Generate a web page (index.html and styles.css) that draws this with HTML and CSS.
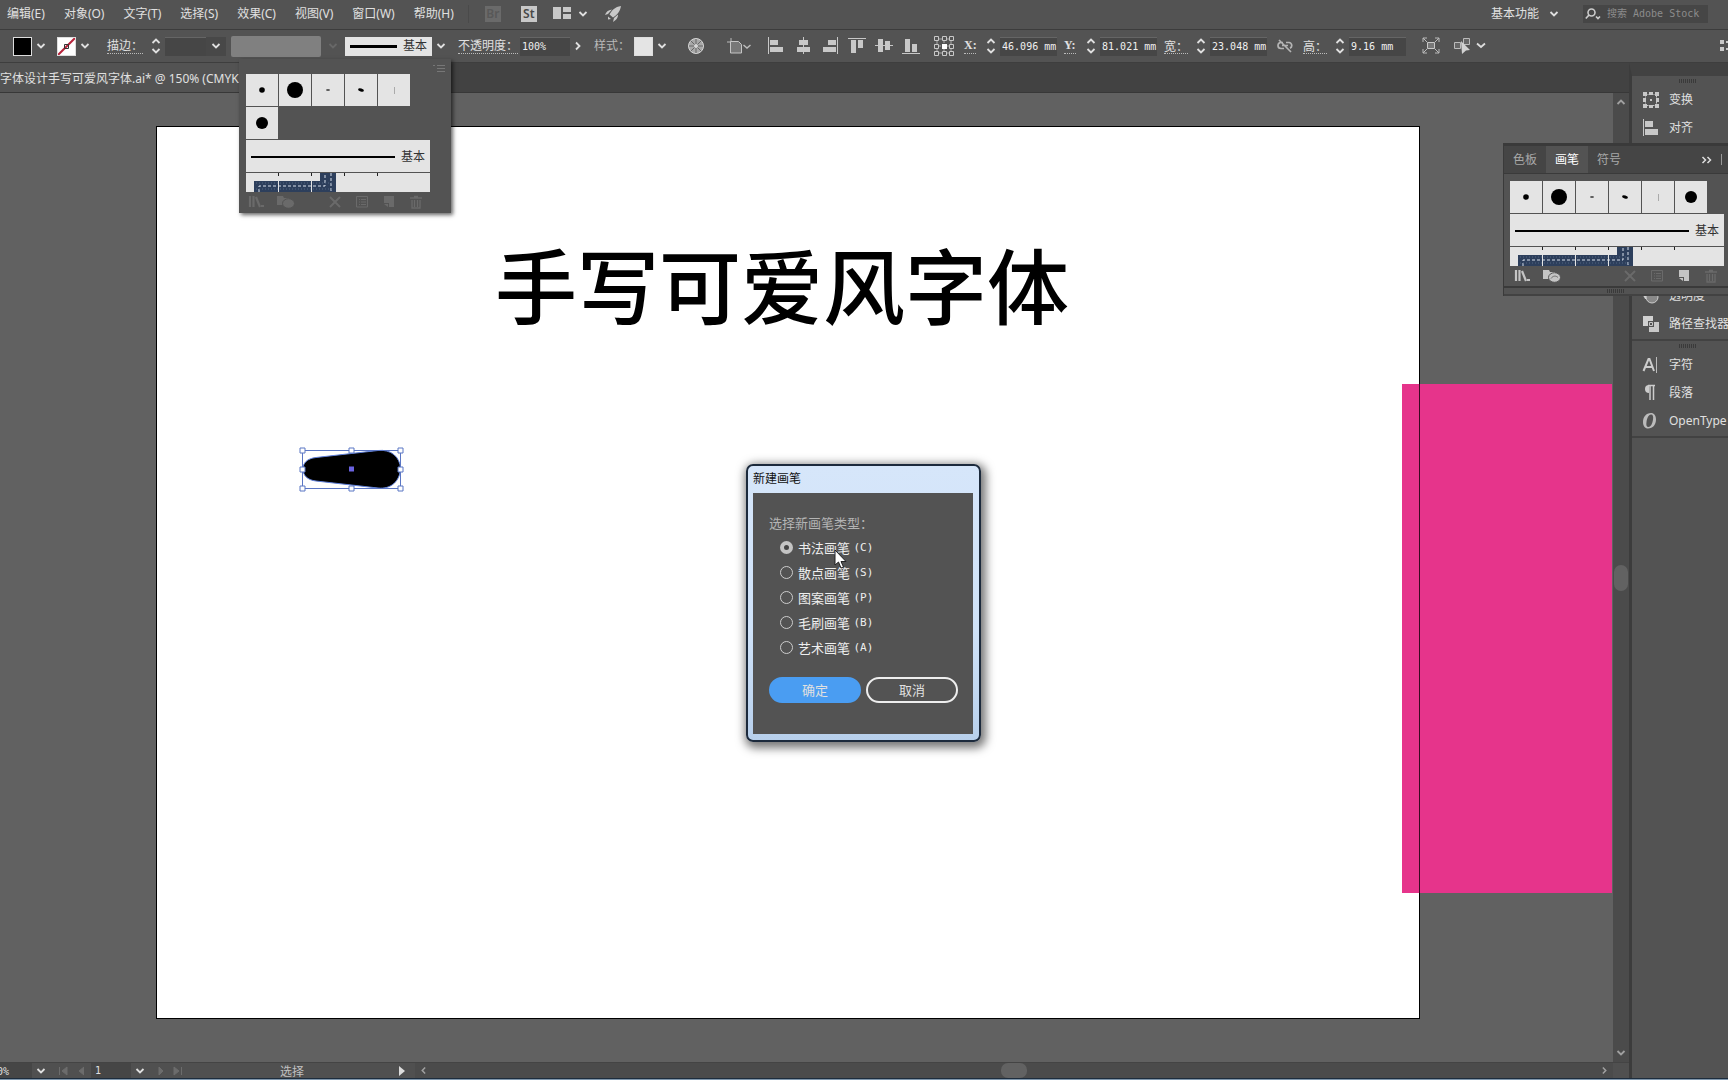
FILE: index.html
```html
<!DOCTYPE html>
<html lang="zh-CN">
<head>
<meta charset="utf-8">
<title>字体设计手写可爱风字体.ai</title>
<link rel="stylesheet" href="styles.css">
</head>
<body>
<svg class="defs" aria-hidden="true">
  <symbol id="chev" viewBox="0 0 10 6"><path d="M1.5 1l3.5 3.5L8.500 1" fill="none" stroke="currentColor" stroke-width="1.800"/></symbol>
  <symbol id="chev-r" viewBox="0 0 6 10"><path d="M1 1.500l3.500 3.500L1 8.500" fill="none" stroke="currentColor" stroke-width="1.800"/></symbol>
  <symbol id="spin" viewBox="0 0 10 16"><path d="M1.500 5L5 1.500 8.500 5M1.500 11L5 14.500 8.500 11" fill="none" stroke="currentColor" stroke-width="1.800"/></symbol>
  <symbol id="grip" viewBox="0 0 20 4"><path d="M1 2h18" stroke="#3a3a3a" stroke-width="4" stroke-dasharray="1 1"/></symbol>
  <symbol id="lib" viewBox="0 0 16 14"><path d="M2 1v11M5.500 1v11M8 2l4 10" fill="none" stroke="currentColor" stroke-width="2.200"/><path d="M13 10h3v2h-3z" fill="currentColor"/></symbol>
  <symbol id="folder" viewBox="0 0 18 14"><path d="M0 1h6l1 2h5v7H0z" fill="currentColor"/><ellipse cx="11.500" cy="8.500" rx="6" ry="4.800" fill="currentColor" stroke="#535353"/><path d="M8 9.500c2-3 5-3 7-1" fill="none" stroke="#6a6a6a"/></symbol>
  <symbol id="cross" viewBox="0 0 14 14"><path d="M2 2l10 10M12 2L2 12" stroke="currentColor" stroke-width="2"/></symbol>
  <symbol id="opts" viewBox="0 0 14 14"><path d="M1.500 1.500h11v10.500h-11zM4 4.500h1M6 4.500h5M4 7h1M6 7h5M4 9.500h1M6 9.500h5" fill="none" stroke="currentColor"/></symbol>
  <symbol id="newdoc" viewBox="0 0 14 14"><path d="M2 1h10v11H7V8H2z" fill="currentColor"/><path d="M2 9h4v3z" fill="currentColor"/></symbol>
  <symbol id="bin" viewBox="0 0 14 14"><path d="M1 3h12M5 1.500h4M3 5v8h8V5M5.500 5v7M8.500 5v7" fill="none" stroke="currentColor" stroke-width="1.300"/></symbol>
</svg>

<div class="app">
  <header class="menubar">
    <nav class="menus">
      <button>编辑(E)</button><button>对象(O)</button><button>文字(T)</button><button>选择(S)</button><button>效果(C)</button><button>视图(V)</button><button>窗口(W)</button><button>帮助(H)</button>
    </nav>
    <div class="apps">
      <button class="tile off">Br</button>
      <button class="tile">St</button>
      <button class="arrange" aria-label="排列文档"><svg width="18" height="13"><path d="M0 0h8v12H0zM10 0h8v5h-8zM10 7h8v5h-8z" fill="#c8c8c8"/></svg><svg width="10" height="6"><use href="#chev"/></svg></button>
      <button aria-label="GPU"><svg width="18" height="18" viewBox="0 0 18 18"><path d="M17 1C11 2 8 5 5.500 9.500l3.500 3C13 10 16 7 17 1zM8 4.500C4 5 2 7 1 10l3-1zM14 9.500c0 4-2 5.500-5 7.500l1-4zM4 11.500l3 2.500-3 .5z" fill="#c8c8c8"/></svg></button>
    </div>
    <div class="menu-right">
      <button class="workspace">基本功能 <svg width="10" height="6"><use href="#chev"/></svg></button>
      <label class="search"><svg width="17" height="12" viewBox="0 0 17 12"><circle cx="6.500" cy="4.500" r="3.500" fill="none" stroke="#ccc" stroke-width="1.600"/><path d="M4 7L.8 10.500M11 8.500l2 2 2-2" fill="none" stroke="#ccc" stroke-width="1.700"/></svg><input type="text" placeholder="搜索 Adobe Stock" aria-label="搜索 Adobe Stock"></label>
    </div>
  </header>

  <div class="controls">
    <div class="grp colors">
      <span class="swatch fill"></span><button class="drop" aria-label="填色"><svg width="10" height="6"><use href="#chev"/></svg></button>
      <span class="swatch none"><svg width="19" height="19"><path d="M1 18L18 1" stroke="#b8243c" stroke-width="2"/><path d="M7.500 7.500h4v4h-4z" fill="none" stroke="#333"/></svg></span><button class="drop" aria-label="描边颜色"><svg width="10" height="6"><use href="#chev"/></svg></button>
    </div>
    <div class="grp">
      <label class="lab" for="sw">描边：</label>
      <svg class="spin" width="10" height="16"><use href="#spin"/></svg>
      <input id="sw" class="field stroke-w" type="text"><button class="drop sunk" aria-label="描边粗细"><svg width="10" height="6"><use href="#chev"/></svg></button>
      <span class="profile"></span><button class="drop off" aria-label="宽度配置"><svg width="10" height="6"><use href="#chev"/></svg></button>
      <button class="brushbox"><i></i>基本</button><button class="drop" aria-label="画笔定义"><svg width="10" height="6"><use href="#chev"/></svg></button>
    </div>
    <div class="grp">
      <label class="lab" for="op">不透明度：</label>
      <input id="op" class="field opacity" type="text" value="100%"><button class="more" aria-label="不透明度"><svg width="6" height="10"><use href="#chev-r"/></svg></button>
    </div>
    <div class="grp style-grp">
      <span class="plain">样式：</span><span class="swatch light"></span><button class="drop" aria-label="样式"><svg width="10" height="6"><use href="#chev"/></svg></button>
    </div>
    <button class="ic" aria-label="重新着色"><svg width="18" height="18" viewBox="0 0 18 18"><circle cx="9" cy="9" r="7.500" fill="#a8a8a8" stroke="#d6d6d6"/><path d="M9 2v14M2 9h14M4 4l10 10M14 4L4 14" stroke="#666"/><circle cx="9" cy="9" r="2" fill="#d6d6d6"/></svg></button>
    <button class="ic wide" aria-label="对齐画板"><svg width="26" height="18" viewBox="0 0 26 18"><path d="M5 1v4M1 5h4" stroke="#bbb"/><path d="M4.500 4.500h8l3 3V16h-11z" fill="#777" stroke="#c4c4c4"/><path d="M17.500 8l3.500 3 3.500-3" fill="none" stroke="#bbb" stroke-width="1.500"/></svg></button>
    <div class="aligns">
      <button aria-label="左对齐"><svg width="18" height="18"><path d="M1.500 0v17" stroke="#c8c8c8"/><path d="M3 3h8v5H3zM3 10h13v5H3z" fill="#c8c8c8"/></svg></button>
      <button aria-label="水平居中"><svg width="18" height="18"><path d="M9.500 0v17" stroke="#c8c8c8"/><path d="M5 3h9v5H5zM3 10h13v5H3z" fill="#c8c8c8"/></svg></button>
      <button aria-label="右对齐"><svg width="18" height="18"><path d="M16.500 0v17" stroke="#c8c8c8"/><path d="M7 3h8v5H7zM2 10h13v5H2z" fill="#c8c8c8"/></svg></button>
      <button aria-label="顶对齐"><svg width="18" height="18"><path d="M0 1.500h18" stroke="#c8c8c8"/><path d="M3 3h5v13H3zM10 3h5v8h-5z" fill="#c8c8c8"/></svg></button>
      <button aria-label="垂直居中"><svg width="18" height="18"><path d="M0 8.500h18" stroke="#c8c8c8"/><path d="M3 2h5v13H3zM10 4h5v9h-5z" fill="#c8c8c8"/></svg></button>
      <button aria-label="底对齐"><svg width="18" height="18"><path d="M0 16.500h18" stroke="#c8c8c8"/><path d="M3 2h5v13H3zM10 7h5v8h-5z" fill="#c8c8c8"/></svg></button>
    </div>
    <button class="ic refpt" aria-label="参考点"><svg width="20" height="20"><path d="M3 3h14v14H3zM10 3v4M10 13v4M3 10h4M13 10h4" fill="none" stroke="#aaa"/><g fill="#535353" stroke="#c8c8c8"><path d="M.5.500h4v4h-4zM8.500.500h4v4h-4zM15.500.500h4v4h-4zM.5 8.500h4v4h-4zM15.500 8.500h4v4h-4zM.5 15.500h4v4h-4zM8.500 15.500h4v4h-4zM15.500 15.500h4v4h-4z"/></g><path d="M8 8h5v5H8z" fill="#fff"/></svg></button>
    <div class="xf"><label class="lab" for="fx">X:</label><svg class="spin" width="10" height="16"><use href="#spin"/></svg><input id="fx" class="field" type="text" value="46.096 mm"></div>
    <div class="xf"><label class="lab" for="fy">Y:</label><svg class="spin" width="10" height="16"><use href="#spin"/></svg><input id="fy" class="field" type="text" value="81.021 mm"></div>
    <div class="xf cjk"><label class="lab" for="fw">宽：</label><svg class="spin" width="10" height="16"><use href="#spin"/></svg><input id="fw" class="field" type="text" value="23.048 mm"></div>
    <button class="ic link" aria-label="约束比例"><svg width="16" height="14" viewBox="0 0 16 14"><path d="M6 3.500H4a3 3 0 0 0 0 6h3M9 3.500h3a3 3 0 0 1 1 5.700M5 6.500h6M2 1l12 12" fill="none" stroke="#b4b4b4" stroke-width="1.700"/></svg></button>
    <div class="xf cjk"><label class="lab" for="fh">高：</label><svg class="spin" width="10" height="16"><use href="#spin"/></svg><input id="fh" class="field" type="text" value="9.16 mm"></div>
    <button class="ic" aria-label="隔离"><svg width="18" height="18"><path d="M5.500 5.500h7v6h-7z" fill="#777" stroke="#c8c8c8"/><path d="M1 1l4 4M17 1l-4 4M1 16l4-4M17 16l-4-4M1 5V1h4M13 1h4v4M1 12v4h4M13 16h4v-4" fill="none" stroke="#bbb"/></svg></button>
    <button class="ic wide" aria-label="选择类似"><svg width="34" height="18"><path d="M1.500 5.500h6v6h-6zM10.500 1.500h6v6h-6z" fill="#666" stroke="#bbb"/><path d="M8 4l9 9-4 .5L9 17z" fill="#d2d2d2"/><path d="M24 6.500l4 3.500 4-3.500" fill="none" stroke="#ddd" stroke-width="1.800"/></svg></button>
    <button class="ic last" aria-label="面板"><svg width="9" height="14"><path d="M1 1h4v4H1zM1 8h4v4H1zM7 2h2v2H7zM7 9h2v2H7z" fill="#c8c8c8"/></svg></button>
  </div>

  <div class="work">
    <main class="doc">
      <div class="tabs"><button class="tab">字体设计手写可爱风字体.ai* @ 150% (CMYK/预览)</button></div>
      <div class="view">
        <div class="canvas">
          <div class="artboard"></div>
          <div class="pink"></div>
          <div class="edge"></div>
          <h1 class="headline">手写可爱风字体</h1>
          <svg class="shape" width="106" height="46" viewBox="0 0 106 46">
            <path d="M17 10.500L79 3.500C92 2 101 10 101.500 21.500 101 34 92 42.500 79 41L17 34C8 33 4 28 4 22S8 11.500 17 10.500z" fill="#000" stroke="#5f7fd8"/>
            <path d="M3.500 3.500h98v38h-98z" fill="none" stroke="#5b76c4"/>
            <g fill="#fff" stroke="#5b76c4"><path d="M1 1h5v5H1zM50 1h5v5h-5zM99 1h5v5h-5zM1 20h5v5H1zM99 20h5v5h-5zM1 39h5v5H1zM50 39h5v5h-5zM99 39h5v5h-5z"/></g>
            <path d="M50 19.500h5v5h-5z" fill="#6a62e0"/>
          </svg>
        </div>
        <div class="vscroll"><svg class="flip" width="10" height="6"><use href="#chev"/></svg><i></i><svg width="10" height="6"><use href="#chev"/></svg></div>
      </div>
      <footer class="status">
        <span class="zoom">150%</span><button class="drop" aria-label="缩放"><svg width="10" height="6"><use href="#chev"/></svg></button>
        <svg class="nav" width="26" height="10"><path d="M1.500 1v8M9 1v8L4 5zM26 1v8l-5-4z" fill="#6c6c6c" stroke="#6c6c6c" stroke-width="1"/></svg>
        <input class="page" type="text" value="1" aria-label="画板"><button class="drop" aria-label="画板导航"><svg width="10" height="6"><use href="#chev"/></svg></button>
        <svg class="nav" width="26" height="10"><path d="M2 1v8l4-4zM17 1v8l5-4zM24.500 1v8" fill="#6c6c6c" stroke="#6c6c6c"/></svg>
        <span class="tool">选择</span>
        <svg class="play" width="6" height="10"><path d="M0 0v10l6-5z" fill="#ddd"/></svg>
        <div class="hscroll"><svg class="flip" width="5" height="9" viewBox="0 0 6 10"><use href="#chev-r"/></svg><i></i><svg width="5" height="9" viewBox="0 0 6 10"><use href="#chev-r"/></svg></div>
      </footer>
    </main>

    <aside class="dock">
      <section>
        <svg class="grip" width="20" height="4"><use href="#grip"/></svg>
        <button><svg width="18" height="18"><path d="M3.500 3.500h11v11h-11z" fill="none" stroke="#c8c8c8" stroke-dasharray="2 1"/><path d="M1 1h4v4H1zM7 1h4v3H7zM13 1h4v4h-4zM1 13h4v4H1zM13 13h4v4h-4zM7 14h4v3H7zM1 7h3v4H1zM14 7h3v4h-3zM8 8h2v2H8z" fill="#c8c8c8"/></svg>变换</button>
        <button><svg width="18" height="18"><path d="M1.500 0v17" stroke="#c8c8c8"/><path d="M3 2h8v6H3zM3 10h13v6H3z" fill="#c8c8c8"/></svg>对齐</button>
      </section>
      <section class="lower">
        <button><svg width="18" height="18"><circle cx="7" cy="7" r="6" fill="#d0d0d0"/><circle cx="10" cy="10" r="6" fill="#888" stroke="#ccc"/></svg>透明度</button>
        <button><svg width="18" height="18"><path d="M1 1h10v5H6v5H1z" fill="#d0d0d0"/><path d="M12 7h5v10H7v-5h5z" fill="#c8c8c8"/><path d="M7.500 7.500h3v3h-3z" fill="none" stroke="#c8c8c8"/></svg>路径查找器</button>
      </section>
      <section>
        <svg class="grip" width="20" height="4"><use href="#grip"/></svg>
        <button><svg width="18" height="18"><path d="M1.500 15L6.500 3h1L12 15M3 11h7" fill="none" stroke="#ccc" stroke-width="2"/><path d="M14.500 1v16" stroke="#bbb"/></svg>字符</button>
        <button><svg width="18" height="18"><path d="M7 9a4 4 0 0 1 0-8z" fill="#ccc"/><path d="M6 1.500h7M8 1v15M11.500 1v15" stroke="#ccc" stroke-width="1.500"/></svg>段落</button>
        <button><svg width="18" height="18"><path d="M9 1C4 1 1 5 1 10c0 4 2 6.500 5 6.500 5 0 8-4 8-9C14 3.500 12 1 9 1zM9 2.500c2 0 2.500 2 2 5C10.500 12 8.500 15 6.500 15s-2.500-2-2-5C5 5.500 7 2.500 9 2.500z" fill="#bbb" fill-rule="evenodd"/></svg>OpenType</button>
      </section>
    </aside>
  </div>
  <div class="taskbar"></div>
</div>

<div class="brush-pop">
  <svg class="burger" width="12" height="8"><path d="M0 1.500h2M4 1.500h8M4 4.500h8M4 7.500h8" stroke="#777"/></svg>
  <div class="cells">
    <button aria-label="画笔 1"><svg width="32" height="32"><circle cx="16" cy="16" r="2.800"/></svg></button><button aria-label="画笔 2"><svg width="32" height="32"><circle cx="16" cy="16" r="8"/></svg></button><button aria-label="画笔 3"><svg width="32" height="32"><ellipse cx="16" cy="16" rx="2" ry="1" fill="#555"/></svg></button><button aria-label="画笔 4"><svg width="32" height="32"><ellipse cx="16" cy="16" rx="3" ry="1.500" transform="rotate(15 16 16)"/></svg></button><button aria-label="画笔 5"><svg width="32" height="32"><path d="M16.500 13v7" stroke="#aaa"/></svg></button><button aria-label="画笔 6"><svg width="32" height="32"><circle cx="16" cy="16" r="6"/></svg></button>
  </div>
  <button class="basic"><i></i>基本</button>
  <svg class="pattern" width="184" height="19"><path d="M8 8h66V0h16v19H8z" fill="#2d3f5c"/><path d="M13 19v-6h66V0M85 0v19" fill="none" stroke="#d8e0ea" stroke-dasharray="3 2"/><path d="M10 16h78M10 10h78" stroke="#526681" stroke-dasharray="1 2"/><path d="M32.500 8v11M65.500 8v11" stroke="#e4e4e4"/><path d="M32.500 0v3M65.500 0v3M98.500 0v3M131.500 0v3" stroke="#222"/></svg>
  <div class="tools off"><svg width="16" height="14"><use href="#lib"/></svg><svg width="18" height="14"><use href="#folder"/></svg><span></span><svg width="14" height="14"><use href="#cross"/></svg><svg width="14" height="14"><use href="#opts"/></svg><svg width="14" height="14"><use href="#newdoc"/></svg><svg width="14" height="14"><use href="#bin"/></svg></div>
</div>

<div class="float">
  <div class="ftabs"><button>色板</button><button class="on">画笔</button><button>符号</button><svg width="12" height="8"><path d="M1.500 1L4.500 4l-3 3M6.500 1l3 3-3 3" fill="none" stroke="#ddd" stroke-width="1.500"/></svg><b></b></div>
  <div class="fbody">
    <div class="cells">
      <button aria-label="画笔 1"><svg width="32" height="32"><circle cx="16" cy="16" r="2.800"/></svg></button><button aria-label="画笔 2"><svg width="32" height="32"><circle cx="16" cy="16" r="8"/></svg></button><button aria-label="画笔 3"><svg width="32" height="32"><ellipse cx="16" cy="16" rx="2" ry="1" fill="#555"/></svg></button><button aria-label="画笔 4"><svg width="32" height="32"><ellipse cx="16" cy="16" rx="3" ry="1.500" transform="rotate(15 16 16)"/></svg></button><button aria-label="画笔 5"><svg width="32" height="32"><path d="M16.500 13v7" stroke="#aaa"/></svg></button><button aria-label="画笔 6"><svg width="32" height="32"><circle cx="16" cy="16" r="6"/></svg></button>
    </div>
    <button class="basic"><i></i>基本</button>
    <svg class="pattern" width="214" height="19"><path d="M8 8h99V0h16v19H8z" fill="#2d3f5c"/><path d="M13 19v-6h100V0M118 0v19" fill="none" stroke="#d8e0ea" stroke-dasharray="3 2"/><path d="M10 16h110M10 10h110" stroke="#526681" stroke-dasharray="1 2"/><path d="M32.500 8v11M65.500 8v11M98.500 8v11" stroke="#e4e4e4"/><path d="M32.500 0v3M65.500 0v3M98.500 0v3M131.500 0v3M164.500 0v3" stroke="#222"/></svg>
    <div class="tools"><svg width="16" height="14"><use href="#lib"/></svg><svg width="18" height="14"><use href="#folder"/></svg><span></span><svg class="dim" width="14" height="14"><use href="#cross"/></svg><svg class="dim" width="14" height="14"><use href="#opts"/></svg><svg width="14" height="14"><use href="#newdoc"/></svg><svg class="dim" width="14" height="14"><use href="#bin"/></svg></div>
  </div>
  <div class="fgrip"><svg width="20" height="4"><use href="#grip"/></svg></div>
</div>

<form class="dialog" role="dialog" aria-label="新建画笔">
  <div class="dtitle">新建画笔</div>
  <fieldset>
    <legend>选择新画笔类型：</legend>
    <label><input type="radio" name="t" checked>书法画笔 <span>(C)</span></label>
    <label><input type="radio" name="t">散点画笔 <span>(S)</span></label>
    <label><input type="radio" name="t">图案画笔 <span>(P)</span></label>
    <label><input type="radio" name="t">毛刷画笔 <span>(B)</span></label>
    <label><input type="radio" name="t">艺术画笔 <span>(A)</span></label>
    <div class="btns"><button type="button" class="ok">确定</button><button type="button">取消</button></div>
  </fieldset>
</form>
<svg class="cursor" width="14" height="20" viewBox="0 0 14 20"><path d="M1 1v15l3.500-3 2.500 6 2.500-1-2.500-5.500H12z" fill="#fff" stroke="#222"/></svg>
</body>
</html>
```
FILE: styles.css
```css
* { box-sizing: border-box; }
body { margin: 0; overflow: hidden; background: #535353; color: #e0e0e0; font: 12px/16px "Noto Sans", "Noto Sans CJK SC", sans-serif; }
button, input { font: inherit; color: inherit; background: none; border: 0; padding: 0; margin: 0; }
svg { display: block; flex: none; }
.defs { position: absolute; width: 0; height: 0; }
.app { height: 100vh; display: flex; flex-direction: column; }
button { white-space: nowrap; flex: none; }

/* menu bar */
.menubar { height: 30px; flex: none; display: flex; align-items: center; padding: 0 20px 2px 7px; border-bottom: 1px solid #3c3c3c; }
.menus { display: flex; gap: 19px; }
.apps { display: flex; align-items: center; gap: 16px; margin-left: 14px; padding-left: 16px; border-left: 1px solid #4a4a4a; }
.tile { width: 16px; height: 16px; background: #c8c8c8; color: #484848; line-height: 16px; margin-right: 4px; text-align: center; font-weight: 600; }
.tile.off { background: #6a6a6a; color: #585858; }
.arrange { display: flex; align-items: center; gap: 7px; margin-left: -4px; }
.menu-right { margin-left: auto; display: flex; align-items: center; gap: 20px; }
.workspace { display: flex; align-items: center; gap: 10px; padding-right: 4px; }
.search { display: flex; align-items: center; gap: 5px; width: 125px; height: 18px; padding-left: 2px; background: #464646; }
.search input { width: 100px; min-width: 0; height: 18px; font: 10px/18px "DejaVu Sans Mono", "Noto Sans CJK SC", monospace; }
.search input::placeholder { color: #8c8c8c; opacity: 1; }

/* control bar */
.controls { height: 33px; flex: none; display: flex; align-items: center; padding: 0 0 0 13px; border-bottom: 1px solid #3e3e3e; }
.grp { display: flex; align-items: center; margin-right: 4px; }
.colors { margin-right: 9px; }
.swatch { width: 19px; height: 19px; flex: none; border: 1px solid #ddd; }
.swatch.fill { background: #000; }
.swatch.none { background: #fff; margin-left: 7px; overflow: hidden; }
.swatch.none svg { margin: -1px; }
.swatch.light { background: #e4e4e4; margin-left: 4px; }
.drop { width: 18px; height: 19px; display: grid; place-items: center; }
.drop.sunk { width: 20px; background: #484848; }
.drop.off { width: 24px; color: #686868; }
.lab { border-bottom: 1px dotted #bbb; line-height: 15px; white-space: nowrap; flex: none; }
.grp .lab { margin-left: 4px; }
.spin { margin: 0 4px 0 10px; }
.grp .spin { margin-left: 8px; }
.field { width: 57px; height: 19px; padding: 0 0 0 2px; background: #464646; font: 10px/19px "DejaVu Sans Mono", monospace; border-top: 1px solid #656565; color: #f0f0f0; }
.stroke-w { width: 41px; }
.profile { width: 90px; height: 21px; margin-left: 5px; background: #808080; border-radius: 2px; }
.brushbox { width: 87px; height: 19px; padding: 0 5px; background: #e4e4e4; color: #333; display: flex; align-items: center; gap: 6px; }
.brushbox i { flex: 1; height: 3px; background: #000; }
.opacity { width: 50px; margin-left: 2px; }
.more { width: 16px; height: 19px; display: grid; place-items: center; }
.plain { color: #b8b8b8; white-space: nowrap; }
.style-grp { margin: 0 16px 0 4px; }
.ic { margin-right: 21px; }
.ic.wide { margin-right: 15px; }
.aligns { display: flex; gap: 9px; margin-right: 14px; }
.refpt { margin-right: 10px; }
.xf { display: flex; align-items: center; margin-right: 7px; }
.xf .lab { width: 12px; font-family: "Liberation Serif", serif; font-weight: 700; }
.xf.cjk .lab { width: 24px; font-family: "Noto Sans CJK SC", sans-serif; font-weight: 400; }
.xf.cjk .spin { margin-left: 8px; }
.link { margin: 0 10px 0 3px; }
.xf + .ic:not(.link) { margin: 0 13px 0 9px; }
.last { margin: 0 0 0 auto; }

/* document */
.work { flex: 1; min-height: 0; display: flex; }
.doc { flex: 1; min-width: 0; display: flex; flex-direction: column; }
.tabs { height: 30px; flex: none; background: #424242; border-bottom: 1px solid #383838; overflow: hidden; }
.tab { height: 29px; width: 320px; overflow: hidden; text-align: left; background: #535353; padding-top: 2px; }
.view { flex: 1; min-height: 0; display: flex; }
.canvas { flex: 1; position: relative; overflow: hidden; background: #616161; }
.artboard { position: absolute; left: 156px; top: 33px; width: 1264px; height: 893px; background: #fff; border: 1px solid #000; }
.pink { position: absolute; left: 1402px; top: 291px; width: 210px; height: 509px; background: #e6348b; }
.edge { position: absolute; left: 1419px; top: 291px; width: 1px; height: 509px; background: #3a0a20; }
.headline { position: absolute; left: 495px; top: 132px; margin: 0; font: 500 82px/116px "Noto Sans CJK SC", sans-serif; color: #000; white-space: nowrap; }
.shape { position: absolute; left: 299px; top: 354px; }
.vscroll { width: 16px; background: #4b4b4b; display: flex; flex-direction: column; align-items: center; justify-content: space-between; padding: 6px 0; color: #a0a0a0; }
.vscroll i { width: 14px; height: 26px; border-radius: 7px; background: #626262; }
.flip { transform: rotate(180deg); }
.status { height: 16px; flex: none; display: flex; align-items: center; background: #505050; border-top: 1px solid #444; }
.zoom { width: 32px; height: 15px; padding-right: 23px; display: flex; justify-content: flex-end; overflow: hidden; background: #464646; font: 10px/17px "DejaVu Sans Mono", monospace; }
.status .drop { width: 17px; height: 15px; }
.nav { margin: 0 7px 0 9px; }
.page { width: 40px; height: 15px; padding: 0 4px; background: #464646; font: 10px/15px "DejaVu Sans Mono", monospace; }
.tool { margin-left: 90px; padding-top: 1px; color: #c0c0c0; line-height: 15px; }
.play { margin: 0 10px 0 95px; }
.hscroll { flex: 1; height: 15px; margin-right: 16px; padding: 0 6px; background: #4b4b4b; color: #a0a0a0; display: flex; align-items: center; justify-content: space-between; }
.hscroll i { width: 26px; height: 15px; border-radius: 7px; background: #626262; }

/* dock */
.dock { width: 99px; flex: none; border-left: 3px solid #3c3c3c; border-top: 13px solid #424242; overflow: hidden; }
.dock section { border-bottom: 2px solid #424242; padding-bottom: 1px; }
.dock section:first-child { border-bottom: 0; padding: 0; }
.dock .grip { margin: 3px 0 3px 46px; }
.dock button { height: 28px; width: 120px; display: flex; align-items: center; gap: 9px; padding-left: 10px; }
.lower { padding-top: 140px; }
.taskbar { height: 2px; flex: none; background: #7f97ad; border-top: 1px solid #1d2c3c; }

/* brush lists */
.cells { display: flex; flex-wrap: wrap; gap: 1px; }
.cells button, .basic, .pattern { background: #e4e4e4; }
.basic { display: flex; align-items: center; gap: 6px; width: 100%; height: 32px; margin: 1px 0; padding: 1px 5px 0; color: #333; }
.basic i { flex: 1; height: 2px; background: #000; }
.tools { display: flex; align-items: center; height: 20px; gap: 13px; color: #c4c4c4; }
.tools span { flex: 1; }
.dim, .tools.off { color: #6a6a6a; }
.brush-pop { position: absolute; left: 239px; top: 59px; width: 212px; padding: 15px 21px 1px 7px; background: #535353; box-shadow: 2px 2px 4px #0009; }
.brush-pop .tools { padding: 0 7px 0 2px; }
.brush-pop .cells { width: 170px; }
.burger { position: absolute; right: 6px; top: 5px; }
.float { position: absolute; right: 0; top: 143px; width: 225px; background: #535353; border-top: 3px solid #3a3a3a; border-left: 1px solid #3a3a3a; }
.ftabs { height: 28px; display: flex; align-items: center; background: #454545; border-bottom: 1px solid #3a3a3a; color: #a8a8a8; padding-right: 6px; }
.ftabs button { height: 27px; width: 42px; padding-top: 1px; }
.ftabs .on { background: #535353; color: #fff; }
.ftabs svg { margin-left: auto; }
.ftabs b { width: 1px; height: 11px; margin-left: 8px; background: #999; }
.fbody { padding: 7px 4px 0 6px; border-bottom: 2px solid #3a3a3a; }
.fbody .tools { padding: 0 6px 0 4px; }
.fgrip { height: 8px; display: flex; justify-content: center; align-items: center; border-bottom: 2px solid #424242; }

/* dialog */
.dialog { position: absolute; left: calc(50% - 118px); top: 464px; width: 235px; margin: 0; padding: 0 6px 6px 5px; border: 2px solid #1c2a3c; border-radius: 7px; background: linear-gradient(#d6e6fa, #cfe2f8 60%, #b8d0ec); box-shadow: 2px 3px 10px 3px #0008; font-size: 13px; }
.dtitle { height: 27px; line-height: 26px; color: #111; font-size: 12px; }
.dialog fieldset { border: 0; margin: 0; min-width: 0; height: 241px; padding: 21px 15px 0 16px; background: #535353; }
.dialog legend { float: left; width: 100%; padding: 0; height: 21px; line-height: 18px; color: #b4b4b4; }
.dialog label { clear: both; display: flex; align-items: center; height: 25px; padding-left: 11px; color: #eee; white-space: pre; }
.dialog label span { font: 11px/16px "DejaVu Sans Mono", monospace; }
.dialog input { appearance: none; width: 13px; height: 13px; margin-right: 5px; border: 1px solid #ccc; border-radius: 50%; flex: none; }
.dialog input:checked { border: 4px solid #c4c4c4; background: #444; }
.btns { display: flex; gap: 5px; margin-top: 17px; }
.btns button { flex: 1; height: 26px; border: 2px solid #eee; border-radius: 13px; line-height: 20px; }
.btns .ok { background: #4a9df2; border-color: #4a9df2; }
.cursor { position: absolute; left: 834px; top: 549px; }
```
